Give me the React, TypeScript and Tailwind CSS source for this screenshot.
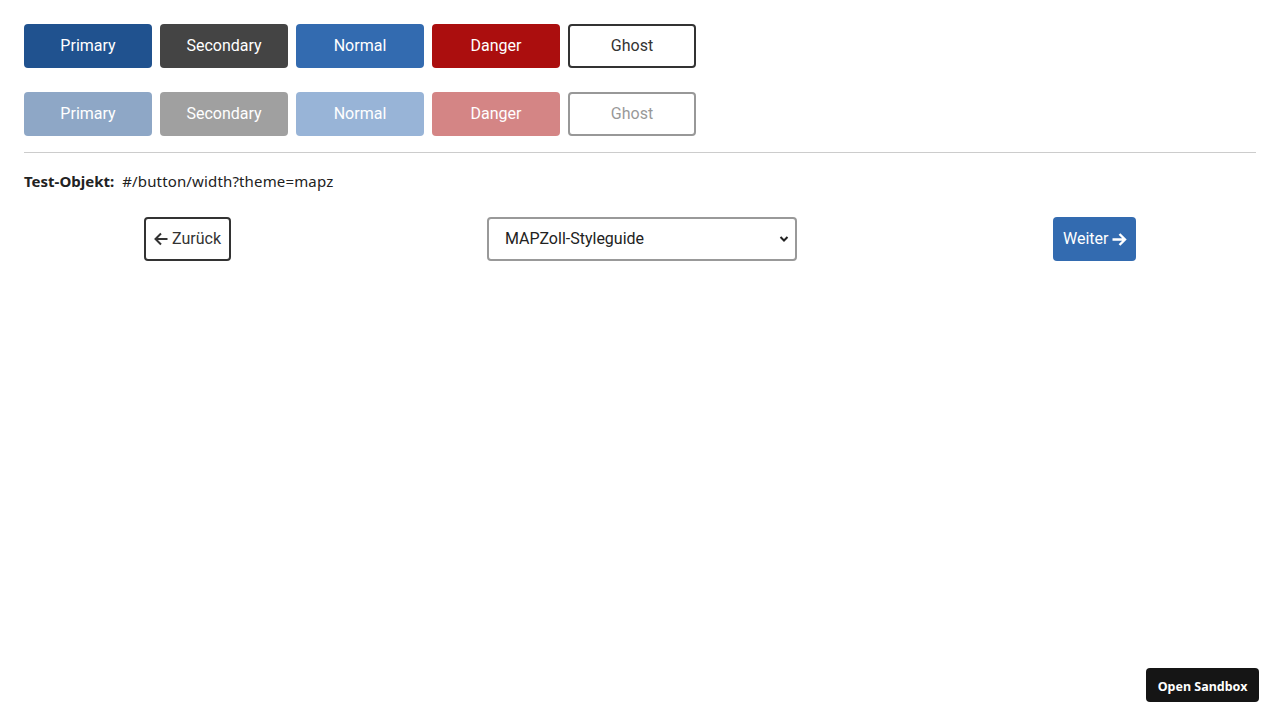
import React from "react";

const btnBase =
  "w-[128px] h-[44px] rounded-[4px] text-[16px] flex items-center justify-center";

function Row({ disabled }: { disabled?: boolean }) {
  const op = disabled ? "opacity-50" : "";
  return (
    <div className="flex gap-2">
      <button className={`${btnBase} ${op} bg-[#20528f] text-white`}>Primary</button>
      <button className={`${btnBase} ${op} bg-[#444444] text-white`}>Secondary</button>
      <button className={`${btnBase} ${op} bg-[#336bb0] text-white`}>Normal</button>
      <button className={`${btnBase} ${op} bg-[#ab0e0e] text-white`}>Danger</button>
      <button className={`${btnBase} ${op} bg-white border-2 border-[#333333] text-[#333333]`}>Ghost</button>
    </div>
  );
}

export default function App() {
  return (
    <div className="min-h-[720px] bg-white relative" style={{ fontFamily: "Roboto, sans-serif" }}>
      <div className="px-6 pt-6">
        <div className="flex flex-col gap-6">
          <Row />
          <Row disabled />
        </div>
        <div className="mt-4 border-t border-[#cccccc]" />
        <div
          className="mt-[16px] flex items-center text-[15px] leading-[24px] text-[#222222]"
          style={{ fontFamily: "'Noto Sans', 'Open Sans', sans-serif" }}
        >
          <span className="font-bold">Test-Objekt:</span>
          <span className="ml-2 tracking-[0.15px]">#/button/width?theme=mapz</span>
        </div>
        <div className="mx-auto w-[992px] mt-[24px] flex items-center justify-between">
          <button className="w-[87px] h-[44px] pl-[8px] rounded-[4px] border-2 border-[#333333] bg-white text-[16px] text-[#333333] flex items-center gap-[4px]">
            <svg width="14" height="14" viewBox="0 0 14 14">
              <path d="M13.5 7 H1.5 M7 1.5 L1.5 7 L7 12.5" stroke="#333" strokeWidth="2" fill="none" />
            </svg>
            <span>Zurück</span>
          </button>
          <div className="relative w-[310px] h-[44px] rounded-[4px] border-2 border-[#999999] bg-white flex items-center pl-[16px] text-[16px] text-[#222222]">
            <span>MAPZoll-Styleguide</span>
            <svg className="absolute right-[6px] top-[16px]" width="10" height="8" viewBox="0 0 10 8">
              <path d="M1.5 2 L5 5.5 L8.5 2" stroke="#222" strokeWidth="2" fill="none" />
            </svg>
          </div>
          <button className="w-[83px] h-[44px] pl-[10px] rounded-[4px] bg-[#336bb0] text-white text-[16px] flex items-center gap-[4px]">
            <span>Weiter</span>
            <svg width="15" height="15" viewBox="0 0 15 15">
              <path d="M0.5 7.5 H13 M7.5 2 L13 7.5 L7.5 13" stroke="white" strokeWidth="2.4" fill="none" />
            </svg>
          </button>
        </div>
      </div>
      <div
        className="absolute right-[21px] bottom-[18px] h-[34px] w-[113px] pt-[4px] rounded-[4px] bg-[#151515] text-white text-[12.5px] font-bold flex items-center justify-center"
        style={{ fontFamily: "'Noto Sans', 'Open Sans', sans-serif" }}
      >
        Open Sandbox
      </div>
    </div>
  );
}
